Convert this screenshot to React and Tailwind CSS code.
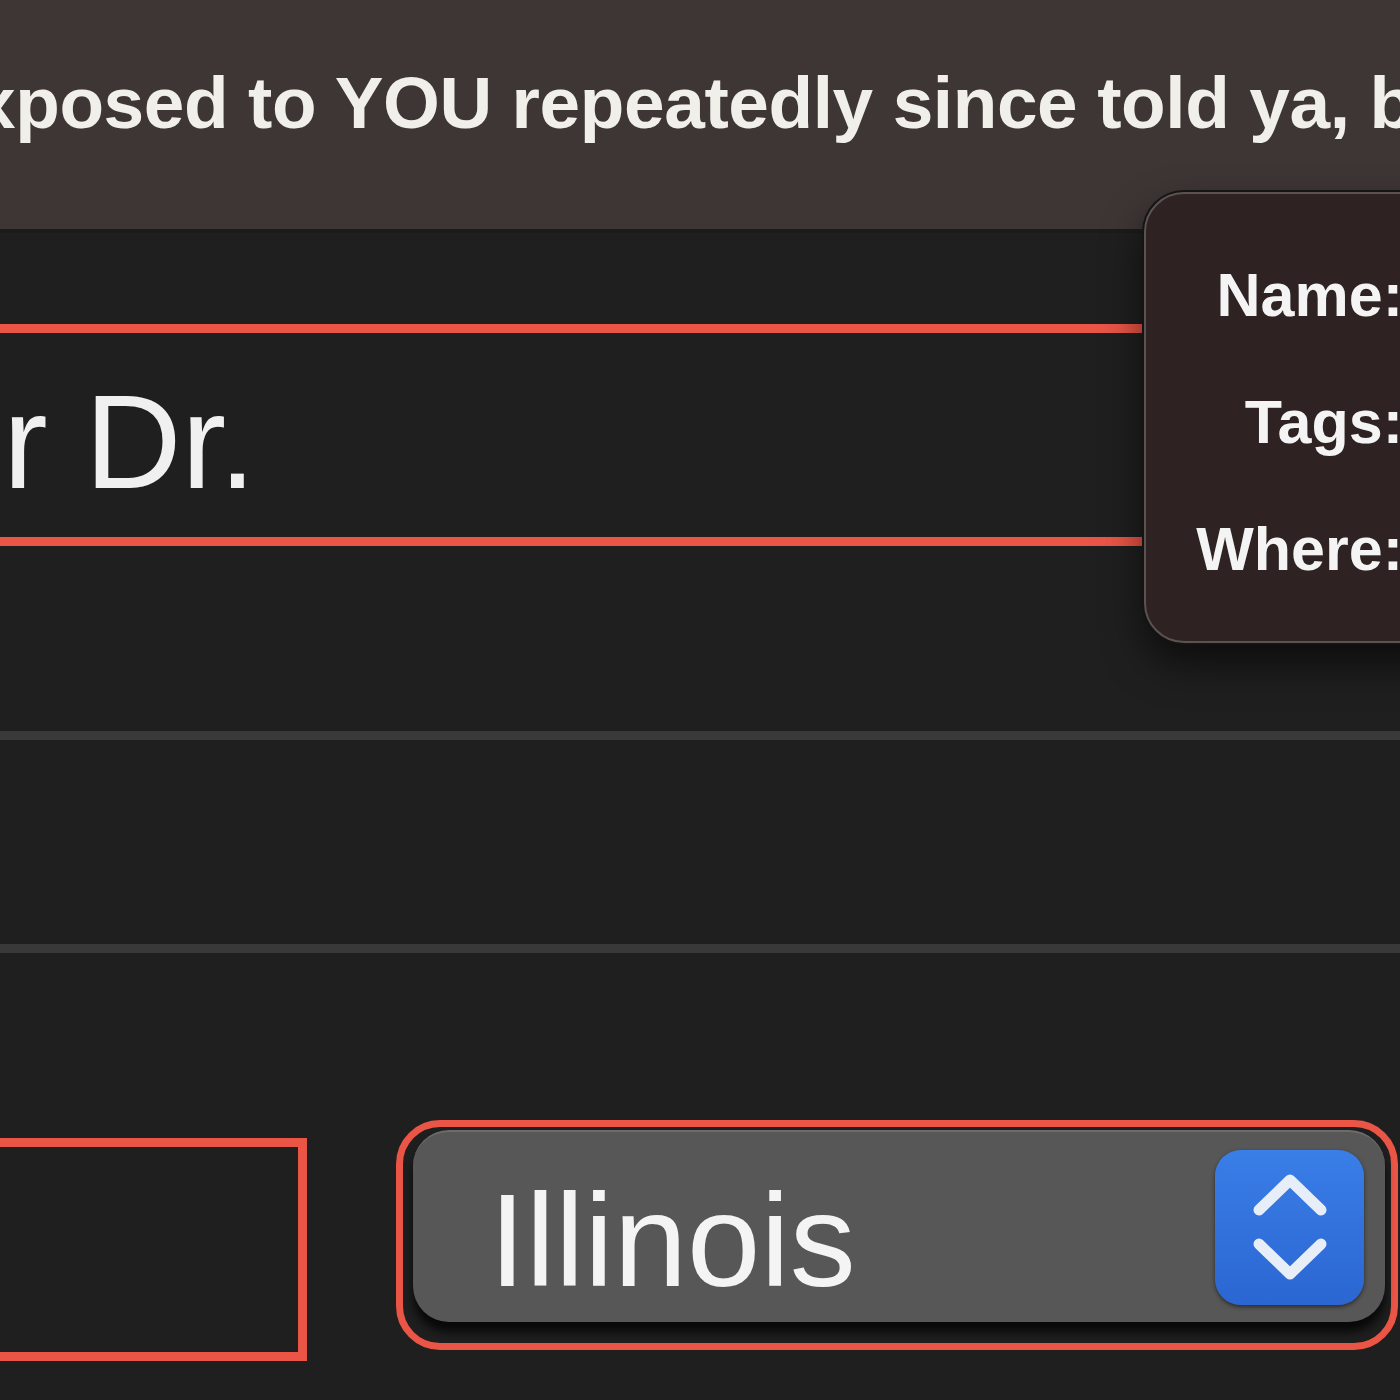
export default function App() {
  return (
    <div className="relative w-[1400px] h-[1400px] overflow-hidden bg-[#1f1f1f] font-['Liberation_Sans',Arial,sans-serif]">
      {/* top bar */}
      <div className="h-[233px] bg-[#3e3635] border-b-[4px] border-[#1b1b1b] pt-[66px]">
        <div className="ml-[-25px] whitespace-nowrap text-[73px] leading-none font-bold tracking-[-0.4px] text-[#f0efe9]">
          xposed to YOU repeatedly since told ya, b
        </div>
      </div>

      <div className="pt-[91px] flex flex-col">
        {/* focused field */}
        <div className="h-[222px] border-y-[9px] border-[#ea5546] pt-[42px]">
          <div className="ml-[3px] whitespace-nowrap text-[134px] leading-none text-[#f0f0f0]">r Dr.</div>
        </div>

        {/* plain field */}
        <div className="mt-[185px] h-[222px] border-y-[9px] border-[#393939]" />

        {/* bottom row */}
        <div className="mt-[167px] flex items-start">
          <div className="mt-[18px] w-[307px] h-[223px] border-[9px] border-l-0 border-[#ea5546]" />
          <div className="ml-[89px] w-[1002px] h-[230px] rounded-[44px] border-[7px] border-[#ea5546] pt-[3px] pl-[10px] pr-[6px]">
            <div className="h-[192px] rounded-[36px] bg-[#575757] border-t-2 border-[#6c6c6c] shadow-[0_10px_10px_rgba(0,0,0,0.75)] flex items-center pl-[76px] pr-[21px]">
              <div className="mt-[28px] flex-1 whitespace-nowrap text-[132px] leading-none text-[#f4f4f4]">Illinois</div>
              <div className="w-[149px] h-[155px] rounded-[26px] bg-gradient-to-b from-[#3a7ee8] to-[#2b66d2] shadow-[0_2px_4px_rgba(0,0,0,0.5)] flex items-center justify-center">
                <svg width="149" height="155" viewBox="0 0 149 155">
                  <polyline points="44,60 75,30 106,60" fill="none" stroke="#e8eef8" strokeWidth="11" strokeLinecap="round" strokeLinejoin="round" />
                  <polyline points="44,94 75,124 106,94" fill="none" stroke="#e8eef8" strokeWidth="11" strokeLinecap="round" strokeLinejoin="round" />
                </svg>
              </div>
            </div>
          </div>
        </div>
      </div>

      {/* popover */}
      <div className="absolute left-[1144px] top-[192px] w-[400px] h-[451px] rounded-[40px] bg-[#2e2322] border-2 border-[#5c5351] shadow-[0_0_0_2px_#141414,0_20px_40px_rgba(0,0,0,0.6)]">
        <div className="w-[257px] pt-[38px] flex flex-col items-end text-[61px] leading-[127px] font-bold text-[#f4f4f4] whitespace-nowrap">
          <div>Name:</div>
          <div>Tags:</div>
          <div>Where:</div>
        </div>
      </div>
    </div>
  );
}
